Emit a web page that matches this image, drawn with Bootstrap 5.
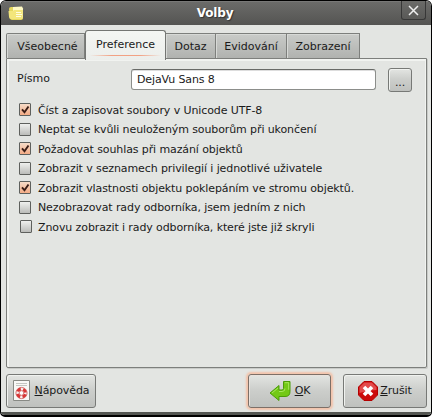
<!DOCTYPE html>
<html lang="cs">
<head>
<meta charset="utf-8">
<meta name="viewport" content="width=device-width, initial-scale=1">
<title>Volby</title>
<link href="https://cdn.jsdelivr.net/npm/bootstrap@5.3.0/dist/css/bootstrap.min.css" rel="stylesheet">
<style>
html,body{height:100%;overflow:hidden}
body{background:#fff;font:11px/14px "DejaVu Sans",sans-serif;color:#1a1a1a}
.window{height:417px;border:solid #000;border-width:1px 1px 2px 1px;border-radius:6px 6px 5px 5px;background:#e3e5e2;overflow:hidden}
.titlebar{height:24px;background:linear-gradient(#858585 0,#6b6b69 1px,#545452 100%);color:#fff;padding-left:7px}
.titlebar h1{font-size:12px;line-height:24px;font-weight:700;text-shadow:1px 1px 1px #333;letter-spacing:-.15px}
.close-box{width:25px;height:19px;margin-right:5px;border:1px solid #373737;border-top:0;border-radius:0 0 3px 3px;background:linear-gradient(#6b6b69,#595957);padding:0}
.main-area{padding:5px 4px 0 5px}
.nav-tabs.tabrow{height:28px;border:0;flex-wrap:nowrap;align-items:flex-end;margin-bottom:0}
.tabrow .nav-link{height:25px;margin:0;padding:0;border:1px solid #7d7f7c;border-left-width:0;border-bottom:0;border-radius:0;color:#1a1a1a;background:linear-gradient(#c9cbc8,#b0b2af);line-height:25px;box-shadow:inset 1px 1px #d7d9d6}
.tabrow .first-tab{border-left-width:1px;border-top-left-radius:2px}
.tabrow .nav-link.active{position:relative;height:30px;margin-bottom:-2px;border:1px solid #747673;border-bottom:0;border-radius:3px 3px 0 0;background:linear-gradient(#f4f6f3,#eceeeb);color:#1a1a1a;line-height:27px;box-shadow:none}
.tabrow .active::after{content:"";display:block;height:1px;margin:-3px 4px 0;background:linear-gradient(90deg,transparent,#f2a183 30%,#f2a183 70%,transparent)}
.pane{height:310px;border:1px solid #7d7f7c;border-radius:0 0 2px 2px;box-shadow:inset 2px 2px #f1f3f0,inset -1px 0 #f1f3f0,1px 1px #c9cbc8;background:#e3e5e2;padding:9px 13px 0 10px}
.fontrow{height:23px}
.fontlabel{width:114px;margin-top:-2px}
.form-control.fontbox{width:245px;height:21px;border:1px solid #8c8e8b;border-top-color:#686a67;border-radius:3px;padding:0 5px;font-size:11px;line-height:19px;background:#fff;color:#1a1a1a;box-shadow:inset 0 1px #ddd;letter-spacing:-.12px}
.btn.raised{border:1px solid #777976;border-radius:3px;background:linear-gradient(#e3e5e2,#cdcfcc 45%,#bfc1be);color:#1a1a1a;padding:0;font-size:11px;line-height:14px;box-shadow:inset 1px 1px #f0f2ef;letter-spacing:-.1px}
.btn.dots{width:24px;height:24px;margin-left:12px;padding-top:6px}
.checks{margin-top:10px;letter-spacing:-.105px}
.checks .form-check{height:19.5px;min-height:0;margin:0;padding:0 0 0 2px;gap:7px}
.form-check .form-check-input{float:none;width:12px;height:13px;flex:none;margin:-2px 0 0;border:1px solid #5e605d;border-radius:1px;background:linear-gradient(#eff0ee,#bbbcb9);position:static}
.form-check .form-check-input:checked{background:url("data:image/svg+xml,%3Csvg xmlns='http://www.w3.org/2000/svg' viewBox='0 0 10 10'%3E%3Cpath d='M2 4.300l2.500 3L8.500 1.500' fill='none' stroke='%23391d16' stroke-width='1.9'/%3E%3C/svg%3E") center/10px no-repeat,linear-gradient(#f6dcc8,#f3ab85);border-color:#5e605d}
.checks .last-check{padding-left:3px;gap:6px}
.actions{padding-top:6px}
.actions .btn{height:34px}
.help{width:90px}.accept{width:83px}.cancel{width:84px}
.btn.accept{margin-left:auto;margin-right:12px;border-color:#7d6f67;box-shadow:0 0 2px 2px #f3c3aa,inset 1px 1px #e9e2dc}
.bottom-edge{height:3px;background:#545652;margin-top:auto}
</style>
<script src="https://cdn.jsdelivr.net/npm/bootstrap@5.3.0/dist/js/bootstrap.bundle.min.js"></script>
</head>
<body>
<div class="window d-flex flex-column">
<header class="titlebar d-flex align-items-start">
<svg class="mt-1" width="17" height="17" viewBox="0 0 17 17"><path d="M1 4q0-2 2-2h3l1 1h6q2 0 2 2v8q0 2-2 2H4q-2 0-2-2Z" fill="#e5d75e"/><path d="M5 2l9-.5 1 2v9H5Z" fill="#fff9c4"/><path d="M.5 6H5l1-1h9l-.5 9H3Q1 14 1 12Z" fill="#f3e67b"/><path d="M8 7.500h5M8 9.500h6M8 11.500h5" stroke="#fffce0"/></svg>
<h1 class="flex-grow-1 text-center m-0 ps-1">Volby</h1>
<button class="close-box d-flex align-items-center justify-content-center" aria-label="Zavřít"><svg width="11" height="11" viewBox="0 0 11 11"><path d="M1 1l9 9M10 1L1 10" stroke="#eee" stroke-width="1.5"/></svg></button>
</header>
<main class="main-area">
<nav class="nav nav-tabs tabrow">
<a class="nav-link first-tab text-center ps-1" style="width:79px">Všeobecné</a>
<a class="nav-link active text-center" style="width:81px">Preference</a>
<a class="nav-link text-center" style="width:50px">Dotaz</a>
<a class="nav-link text-center" style="width:71px">Evidování</a>
<a class="nav-link text-center" style="width:73px">Zobrazení</a>
</nav>
<section class="pane">
<div class="fontrow d-flex align-items-center">
<label class="fontlabel" for="font">Písmo</label>
<input class="form-control fontbox" id="font" value="DejaVu Sans 8">
<button class="btn raised dots">...</button>
</div>
<div class="checks">
<div class="form-check d-flex align-items-center"><input class="form-check-input" type="checkbox" id="c1" checked><label for="c1">Číst a zapisovat soubory v Unicode UTF-8</label></div>
<div class="form-check d-flex align-items-center"><input class="form-check-input" type="checkbox" id="c2"><label for="c2">Neptat se kvůli neuloženým souborům při ukončení</label></div>
<div class="form-check d-flex align-items-center"><input class="form-check-input" type="checkbox" id="c3" checked><label for="c3">Požadovat souhlas při mazání objektů</label></div>
<div class="form-check d-flex align-items-center"><input class="form-check-input" type="checkbox" id="c4"><label for="c4">Zobrazit v seznamech privilegií i jednotlivé uživatele</label></div>
<div class="form-check d-flex align-items-center"><input class="form-check-input" type="checkbox" id="c5" checked><label for="c5">Zobrazit vlastnosti objektu poklepáním ve stromu objektů.</label></div>
<div class="form-check d-flex align-items-center"><input class="form-check-input" type="checkbox" id="c6"><label for="c6">Nezobrazovat rady odborníka, jsem jedním z nich</label></div>
<div class="form-check last-check d-flex align-items-center"><input class="form-check-input" type="checkbox" id="c7"><label for="c7">Znovu zobrazit i rady odborníka, které jste již skryli</label></div>
</div>
</section>
<footer class="actions d-flex">
<button class="btn raised help d-flex align-items-center justify-content-center gap-1"><svg width="18" height="22" viewBox="0 0 18 22"><path d="M.5.500h16v20H.5Z" fill="#f8f8f6" stroke="#888a85"/><path d="M3 3.500h11M3 5.500h11" stroke="#c4c6c2"/><circle cx="8.500" cy="13" r="4" fill="none" stroke="#f6f0ee" stroke-width="3.500"/><circle cx="8.500" cy="13" r="4" fill="none" stroke="#d93636" stroke-width="3" stroke-dasharray="3.800 2.483" stroke-dashoffset="-1.240"/><circle cx="8.500" cy="13" r="5.600" fill="none" stroke="#c94444" stroke-width=".7"/><circle cx="8.500" cy="13" r="2.300" fill="#fff" stroke="#c94444" stroke-width=".7"/></svg><span><u>N</u>ápověda</span></button>
<button class="btn raised accept d-flex align-items-center justify-content-center gap-1"><svg width="22" height="22" viewBox="0 0 22 22"><path d="M14.500 1.500h6.500v10q0 5-5 5H10v4L1 13l9-7.500V10h3q1.500 0 1.500-1.500Z" fill="#73c916" stroke="#4b9b08" stroke-linejoin="round"/><path d="M15.700 2.700h4v7M9 8l-6 5M10 11.500h3q3 0 3-3" fill="none" stroke="#a6e85b"/></svg><span><u>O</u>K</span></button>
<button class="btn raised cancel d-flex align-items-center justify-content-center"><svg class="me-0" width="22" height="20" viewBox="0 0 22 20"><path d="M6 .5h8L19.500 6v8L14 19.500H6L.5 14V6Z" fill="#cc0b0b" stroke="#b30000"/><path d="M6.300 1.500h7.400L18.500 6.300V9Q10 9 1.500 12V6.300Z" fill="#e34b4b"/><path d="M6 6l8 8M14 6l-8 8" stroke="#fff" stroke-width="3.600"/></svg><span><u>Z</u>rušit</span></button>
</footer>
</main>
<div class="bottom-edge"></div>
</div>
</body>
</html>
